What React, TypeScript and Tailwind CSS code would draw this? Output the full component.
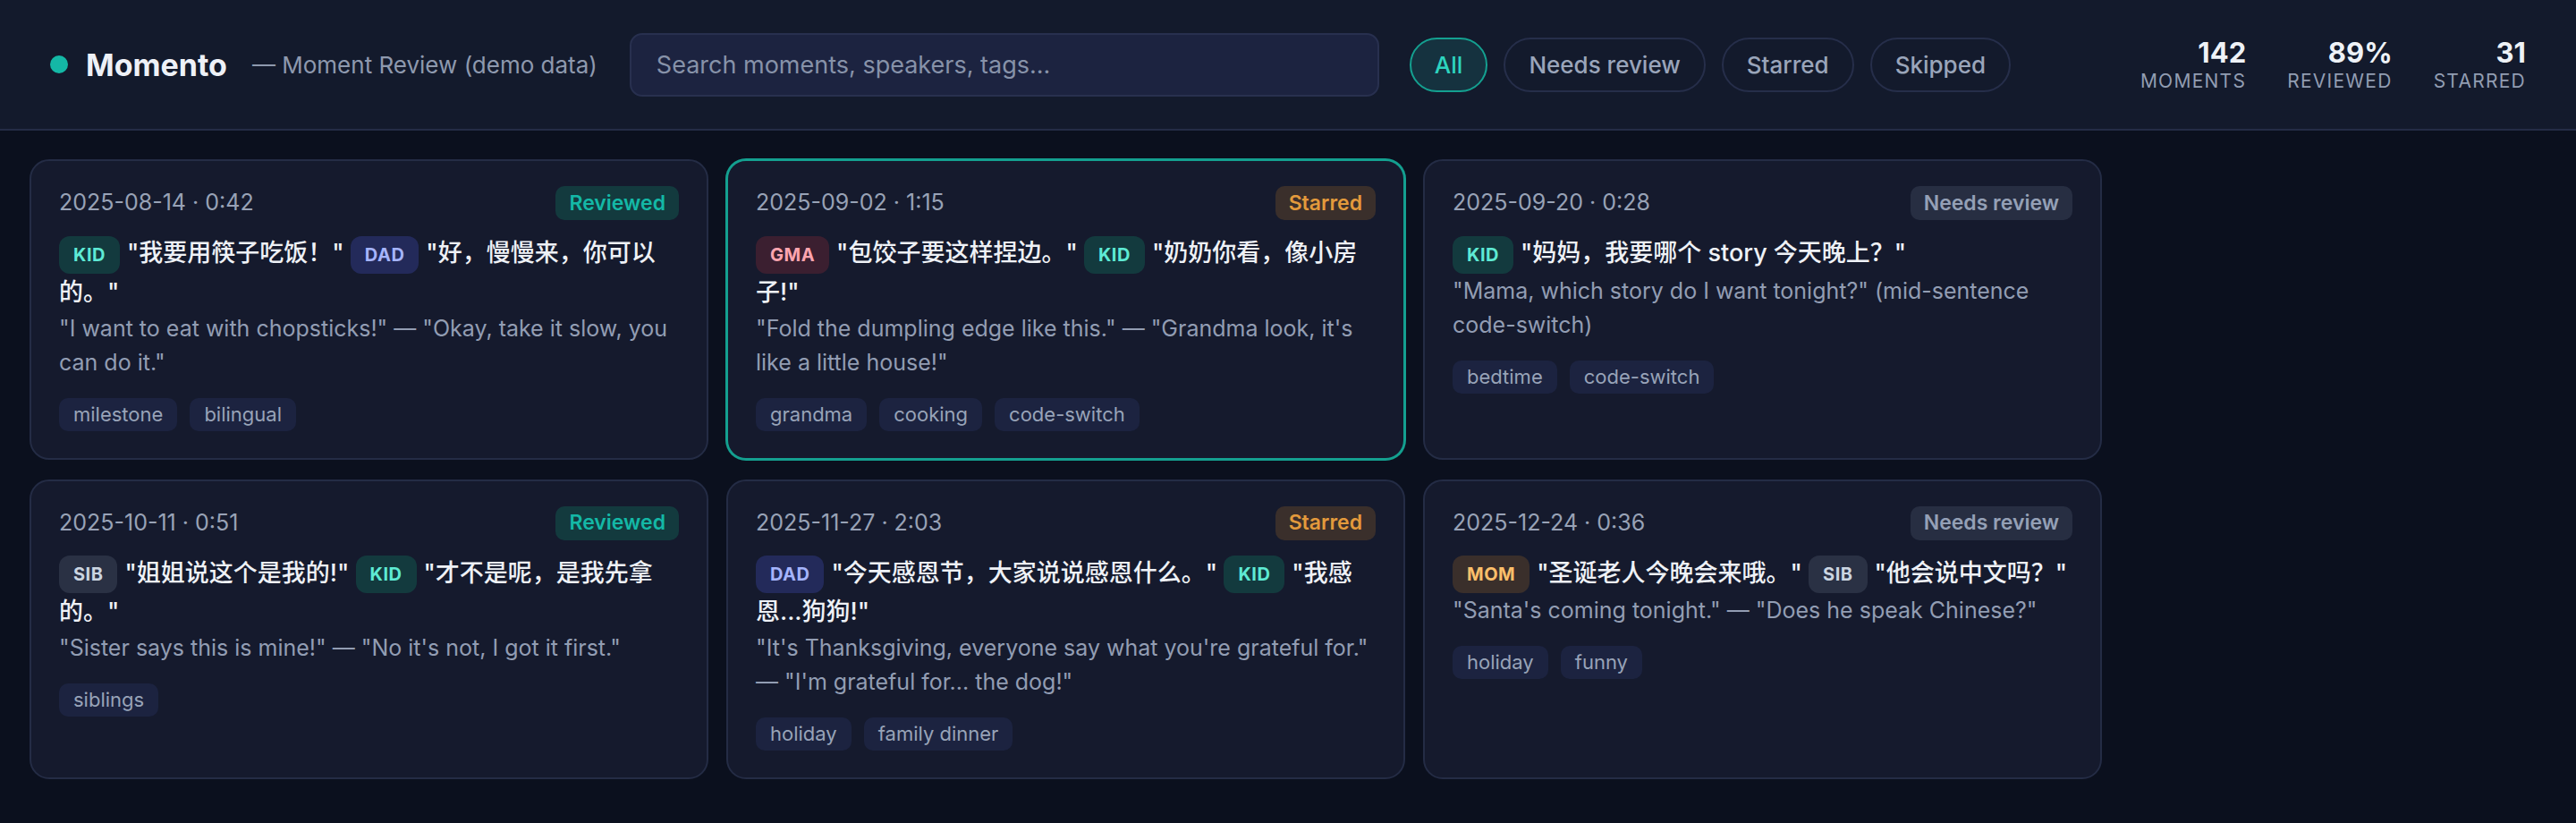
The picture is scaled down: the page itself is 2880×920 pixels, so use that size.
import { useState } from "react";

type Status = "Reviewed" | "Starred" | "Needs review";
type Speaker = "KID" | "DAD" | "MOM" | "GMA" | "SIB";

type Moment = {
  id: number;
  date: string;
  status: Status;
  lines: [Speaker, string][];
  en: string;
  tags: string[];
};

const moments: Moment[] = [
  {
    id: 1,
    date: "2025-08-14 · 0:42",
    status: "Reviewed",
    lines: [
      ["KID", "\"我要用筷子吃饭！\""],
      ["DAD", "\"好，慢慢来，你可以的。\""],
    ],
    en: "\"I want to eat with chopsticks!\" — \"Okay, take it slow, you can do it.\"",
    tags: ["milestone", "bilingual"],
  },
  {
    id: 2,
    date: "2025-09-02 · 1:15",
    status: "Starred",
    lines: [
      ["GMA", "\"包饺子要这样捏边。\""],
      ["KID", "\"奶奶你看，像小房子!\""],
    ],
    en: "\"Fold the dumpling edge like this.\" — \"Grandma look, it's like a little house!\"",
    tags: ["grandma", "cooking", "code-switch"],
  },
  {
    id: 3,
    date: "2025-09-20 · 0:28",
    status: "Needs review",
    lines: [["KID", "\"妈妈，我要哪个 story 今天晚上？\""]],
    en: "\"Mama, which story do I want tonight?\" (mid-sentence code-switch)",
    tags: ["bedtime", "code-switch"],
  },
  {
    id: 4,
    date: "2025-10-11 · 0:51",
    status: "Reviewed",
    lines: [
      ["SIB", "\"姐姐说这个是我的!\""],
      ["KID", "\"才不是呢，是我先拿的。\""],
    ],
    en: "\"Sister says this is mine!\" — \"No it's not, I got it first.\"",
    tags: ["siblings"],
  },
  {
    id: 5,
    date: "2025-11-27 · 2:03",
    status: "Starred",
    lines: [
      ["DAD", "\"今天感恩节，大家说说感恩什么。\""],
      ["KID", "\"我感恩...狗狗!\""],
    ],
    en: "\"It's Thanksgiving, everyone say what you're grateful for.\" — \"I'm grateful for... the dog!\"",
    tags: ["holiday", "family dinner"],
  },
  {
    id: 6,
    date: "2025-12-24 · 0:36",
    status: "Needs review",
    lines: [
      ["MOM", "\"圣诞老人今晚会来哦。\""],
      ["SIB", "\"他会说中文吗？\""],
    ],
    en: "\"Santa's coming tonight.\" — \"Does he speak Chinese?\"",
    tags: ["holiday", "funny"],
  },
];

const statusStyles: Record<Status, string> = {
  Reviewed: "bg-[#133a3e] text-[#14b8a6]",
  Starred: "bg-[#3a2f2b] text-[#e39a3c]",
  "Needs review": "bg-[#272e42] text-[#94a0b6]",
};

const speakerStyles: Record<Speaker, string> = {
  KID: "bg-[#133a3e] text-[#5eead4]",
  DAD: "bg-[#232a5a] text-[#a5b4fc]",
  MOM: "bg-[#3a2f2b] text-[#fbbf6a]",
  GMA: "bg-[#3b1f30] text-[#fda4af]",
  SIB: "bg-[#2a3144] text-[#cbd5e1]",
};

const filters = ["All", "Needs review", "Starred", "Skipped"];

const stats = [
  { value: "142", label: "MOMENTS" },
  { value: "89%", label: "REVIEWED" },
  { value: "31", label: "STARRED" },
];

function MomentCard({ moment, selected }: { moment: Moment; selected: boolean }) {
  return (
    <div
      className={
        selected
          ? "rounded-[22px] border-2 border-[#14a090] bg-[#151a2d] px-[31px] pt-[28px] pb-[30px] ring-1 ring-[#14a090]"
          : "rounded-[22px] border-2 border-[#242c45] bg-[#151a2d] px-[31px] pt-[28px] pb-[30px]"
      }
    >
      <div className="flex h-[38px] items-center justify-between">
        <span className="text-[25px] text-[#98a2b6]">{moment.date}</span>
        <span
          className={`flex h-[38px] items-center rounded-[10px] px-[15px] text-[23px] font-semibold ${statusStyles[moment.status]}`}
        >
          {moment.status}
        </span>
      </div>

      <p className="mt-[16px] text-[27px] leading-[42px] font-medium text-[#eef1f6]">
        {moment.lines.map(([speaker, text], i) => (
          <span key={i}>
            {i > 0 && " "}
            <span
              className={`mr-2 inline-block h-[42px] rounded-[12px] px-[16px] align-middle text-[20px] leading-[42px] font-bold tracking-wide ${speakerStyles[speaker]}`}
            >
              {speaker}
            </span>
            {text}
          </span>
        ))}
      </p>

      <p className="text-[25px] leading-[38px] text-[#929db3]">{moment.en}</p>

      <div className="mt-[21px] flex gap-[14px]">
        {moment.tags.map((tag) => (
          <span
            key={tag}
            className="flex h-[37px] items-center rounded-[10px] bg-[#1c2340] px-[16px] text-[22px] text-[#98a3b8]"
          >
            {tag}
          </span>
        ))}
      </div>
    </div>
  );
}

export default function App() {
  const [filter, setFilter] = useState("All");
  const [query, setQuery] = useState("");

  return (
    <div className="min-h-screen bg-[#0b101e] font-['Inter','Noto_Sans_CJK_SC',sans-serif]">
      <header className="flex h-[146px] items-center border-b-2 border-[#242c46] bg-[#131a2c] px-[56px]">
        <div className="flex items-center">
          <span className="h-5 w-5 rounded-full bg-[#14b8a6]" />
          <span className="ml-5 text-[34px] font-bold text-[#eef1f7]">Momento</span>
          <span className="ml-7 text-[26px] text-[#8e99ae]">— Moment Review (demo data)</span>
        </div>

        <input
          value={query}
          onChange={(e) => setQuery(e.target.value)}
          placeholder="Search moments, speakers, tags..."
          className="ml-[36px] h-[71px] w-[838px] rounded-[14px] border-2 border-[#28304f] bg-[#1c2340] px-[28px] text-[27px] text-[#e2e8f0] outline-none placeholder:text-[#8792a9]"
        />

        <div className="ml-[34px] flex gap-[18px]">
          {filters.map((f) => (
            <button
              key={f}
              type="button"
              onClick={() => setFilter(f)}
              className={
                f === filter
                  ? "h-[61px] rounded-full border-2 border-[#14a090] bg-[#15323f] px-[26px] text-[26px] font-medium text-[#2dd4bf]"
                  : "h-[61px] rounded-full border-2 border-[#262e4a] px-[26px] text-[26px] font-medium text-[#9aa5ba]"
              }
            >
              {f}
            </button>
          ))}
        </div>

        <div className="ml-auto flex gap-[46px]">
          {stats.map((s) => (
            <div key={s.label} className="flex flex-col items-end">
              <span className="text-[31px] leading-[37px] font-bold text-[#eef2f7]">{s.value}</span>
              <span className="text-[21px] leading-[27px] tracking-[0.06em] text-[#929db2]">
                {s.label}
              </span>
            </div>
          ))}
        </div>
      </header>

      <main className="grid grid-cols-[repeat(3,759px)] gap-x-[20px] gap-y-[22px] px-[33px] pt-[32px] pb-[40px]">
        {moments.map((m) => (
          <MomentCard key={m.id} moment={m} selected={m.id === 2} />
        ))}
      </main>
    </div>
  );
}
